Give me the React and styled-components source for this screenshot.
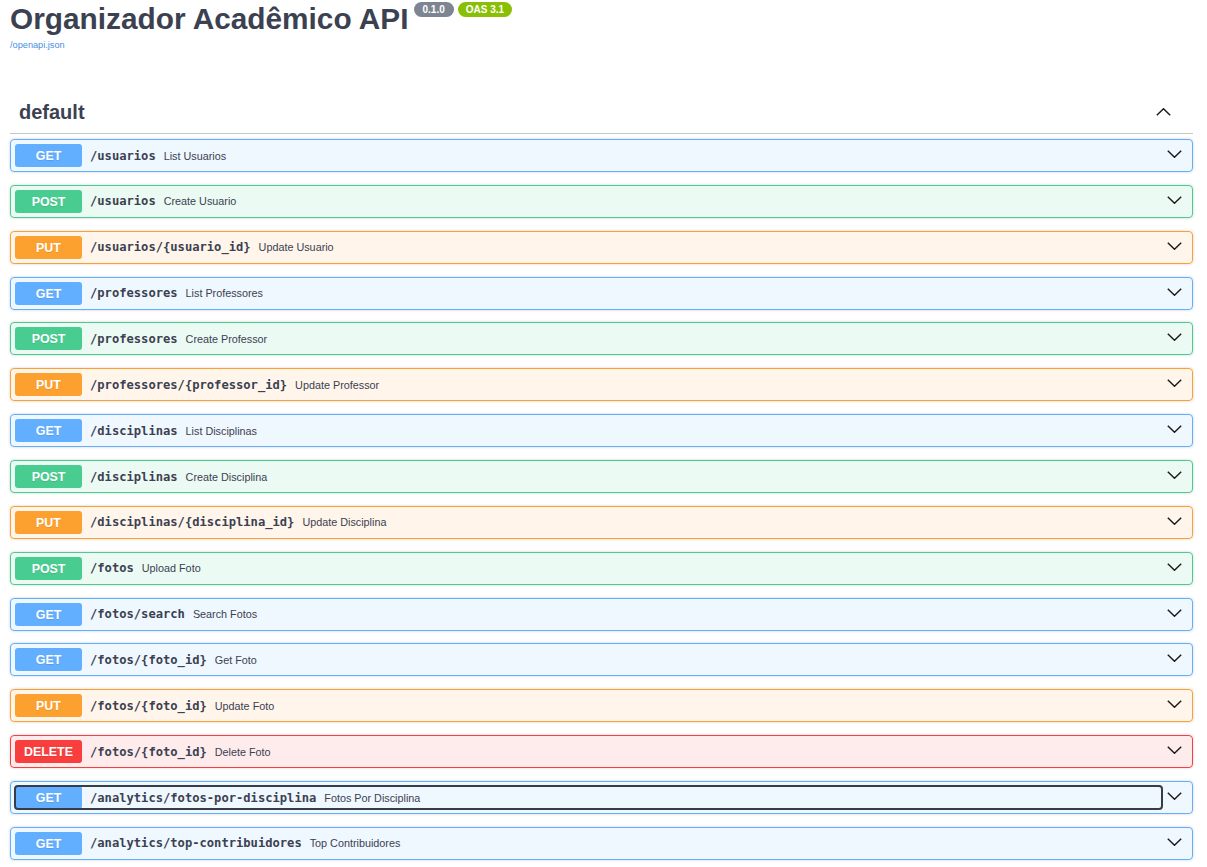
import React from "react";
import styled, { createGlobalStyle } from "styled-components";

const GlobalStyle = createGlobalStyle`
  html, body {
    margin: 0;
    padding: 0;
    background: #fff;
  }
  body {
    font-family: "Liberation Sans", Arial, sans-serif;
    color: #3b4151;
  }
`;

const methodColors = {
  GET: { main: "#61affe", bg: "rgba(97, 175, 254, 0.1)" },
  POST: { main: "#49cc90", bg: "rgba(73, 204, 144, 0.1)" },
  PUT: { main: "#fca130", bg: "rgba(252, 161, 48, 0.1)" },
  DELETE: { main: "#f93e3e", bg: "rgba(249, 62, 62, 0.1)" },
};

const operations = [
  { method: "GET", path: "/usuarios", summary: "List Usuarios" },
  { method: "POST", path: "/usuarios", summary: "Create Usuario" },
  { method: "PUT", path: "/usuarios/{usuario_id}", summary: "Update Usuario" },
  { method: "GET", path: "/professores", summary: "List Professores" },
  { method: "POST", path: "/professores", summary: "Create Professor" },
  { method: "PUT", path: "/professores/{professor_id}", summary: "Update Professor" },
  { method: "GET", path: "/disciplinas", summary: "List Disciplinas" },
  { method: "POST", path: "/disciplinas", summary: "Create Disciplina" },
  { method: "PUT", path: "/disciplinas/{disciplina_id}", summary: "Update Disciplina" },
  { method: "POST", path: "/fotos", summary: "Upload Foto" },
  { method: "GET", path: "/fotos/search", summary: "Search Fotos" },
  { method: "GET", path: "/fotos/{foto_id}", summary: "Get Foto" },
  { method: "PUT", path: "/fotos/{foto_id}", summary: "Update Foto" },
  { method: "DELETE", path: "/fotos/{foto_id}", summary: "Delete Foto" },
  { method: "GET", path: "/analytics/fotos-por-disciplina", summary: "Fotos Por Disciplina", focused: true },
  { method: "GET", path: "/analytics/top-contribuidores", summary: "Top Contribuidores" },
];

const Wrapper = styled.div`
  padding: 0 14px 0 10px;
`;

const Info = styled.div`
  padding-top: 2px;
`;

const Title = styled.h2`
  display: flex;
  align-items: flex-start;
  margin: 0;
  font-size: 29.8px;
  line-height: 34px;
  font-weight: 700;
  color: #3b4151;
  white-space: nowrap;
`;

const Badges = styled.span`
  display: flex;
  gap: 4px;
  margin-left: 5px;
`;

const Badge = styled.span`
  display: inline-block;
  height: 15px;
  line-height: 15px;
  padding: 0 ${(p) => p.$pad}px;
  border-radius: 57px;
  background: ${(p) => p.$color};
  color: #fff;
  font-size: 10px;
  font-weight: 700;
`;

const SpecLink = styled.a`
  display: block;
  margin-top: 3px;
  font-size: 9.2px;
  line-height: 12px;
  color: #4990e2;
  text-decoration: none;
`;

const Section = styled.div`
  margin-top: 40px;
`;

const TagHeader = styled.div`
  display: flex;
  align-items: center;
  justify-content: space-between;
  height: 42px;
  padding: 0 22px 0 9px;
  border-bottom: 1px solid rgba(59, 65, 81, 0.3);
  margin-bottom: 5px;
`;

const TagName = styled.h3`
  margin: 0;
  font-size: 20px;
  line-height: 24px;
  font-weight: 700;
  color: #3b4151;
`;

const OpBlock = styled.div`
  border: 1px solid ${(p) => methodColors[p.$method].main};
  background: ${(p) => methodColors[p.$method].bg};
  border-radius: 4px;
  box-shadow: 0 0 3px rgba(0, 0, 0, 0.19);
  margin-bottom: 12.87px;
`;

const Summary = styled.div`
  display: flex;
  align-items: center;
  padding: 4px 10px 4px 4px;
`;

const Control = styled.div`
  display: flex;
  align-items: center;
  flex: 1;
  min-width: 0;
  border-radius: 3px;
  ${(p) =>
    p.$focused &&
    `
    outline: 2px solid #373c49;
    outline-offset: -1px;
  `}
`;

const Method = styled.span`
  flex: none;
  width: 67px;
  height: 22px;
  padding-top: 1px;
  line-height: 22px;
  border-radius: 3px;
  background: ${(p) => methodColors[p.$method].main};
  color: #fff;
  text-align: center;
  font-size: 12.4px;
  font-weight: 700;
  text-shadow: 0 1px 0 rgba(0, 0, 0, 0.1);
`;

const Path = styled.span`
  padding: 0 8px;
  font-family: "DejaVu Sans Mono", "Liberation Mono", monospace;
  font-size: 12.14px;
  font-weight: 700;
  color: #3b4151;
  white-space: nowrap;
`;

const Description = styled.span`
  font-size: 10.8px;
  color: #3b4151;
  white-space: nowrap;
`;

const ArrowBox = styled.span`
  display: flex;
  padding-left: 5px;
  margin-top: -3px;
`;

const Chevron = ({ up }) => (
  <svg width="15" height="8" viewBox="0 0 15 8">
    <polyline
      points={up ? "0.8,7.2 7.5,0.8 14.2,7.2" : "0.8,0.8 7.5,7.2 14.2,0.8"}
      fill="none"
      stroke="#1b1b1b"
      strokeWidth="1.5"
    />
  </svg>
);

const Operation = ({ method, path, summary, focused }) => (
  <OpBlock $method={method}>
    <Summary>
      <Control $focused={focused}>
        <Method $method={method}>{method}</Method>
        <Path>{path}</Path>
        <Description>{summary}</Description>
      </Control>
      <ArrowBox>
        <Chevron />
      </ArrowBox>
    </Summary>
  </OpBlock>
);

export default function App() {
  return (
    <>
      <GlobalStyle />
      <Wrapper>
        <Info>
          <Title>
            <span>Organizador Acadêmico API</span>
            <Badges>
              <Badge $color="#7d8492" $pad={9}>0.1.0</Badge>
              <Badge $color="#89bf04" $pad={8}>OAS 3.1</Badge>
            </Badges>
          </Title>
          <SpecLink href="#">/openapi.json</SpecLink>
        </Info>
        <Section>
          <TagHeader>
            <TagName>default</TagName>
            <Chevron up />
          </TagHeader>
          {operations.map((op, i) => (
            <Operation key={i} {...op} />
          ))}
        </Section>
      </Wrapper>
    </>
  );
}
